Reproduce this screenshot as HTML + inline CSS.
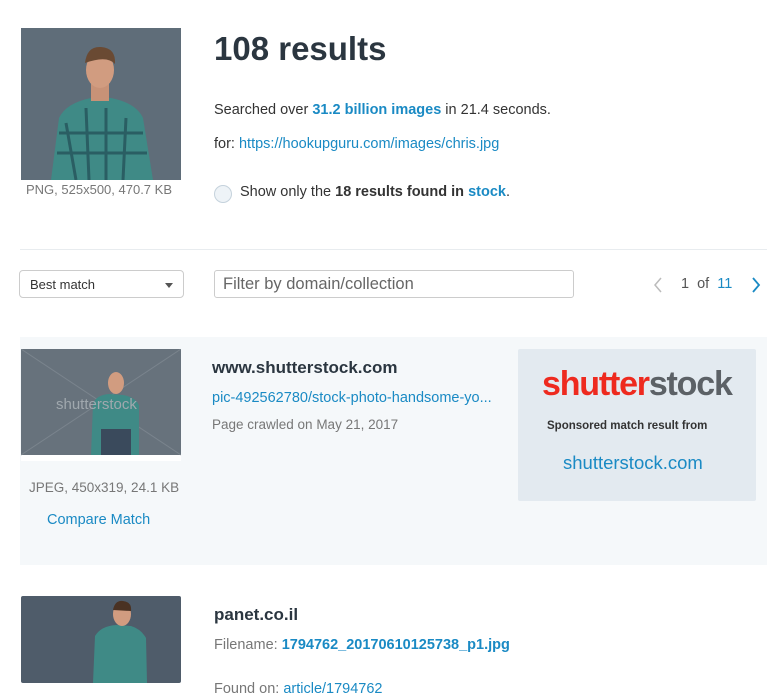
<!DOCTYPE html>
<html><head><meta charset="utf-8"><style>
*{margin:0;padding:0;box-sizing:border-box}
body{width:774px;height:700px;overflow:hidden;background:#fff;font-family:"Liberation Sans",sans-serif;color:#333;position:relative}
.a{position:absolute;white-space:nowrap}
.blue{color:#1a8ac4}
.g{color:#777}
</style></head><body>
<svg class="a" style="left:21px;top:28px" width="160" height="152" viewBox="0 0 160 152">
<rect width="160" height="152" fill="#5f6d79"/>
<path d="M30 152 L38 90 Q45 75 70 70 L90 70 Q115 75 122 90 L132 152Z" fill="#3f8a86"/>
<path d="M45 95 L55 152 M65 80 L68 152 M85 80 L85 152 M105 90 L102 152 M38 105 L122 105 M36 125 L126 125" stroke="#2a5e63" stroke-width="3"/>
<rect x="70" y="55" width="18" height="18" fill="#c89277"/>
<ellipse cx="79" cy="42" rx="14" ry="18" fill="#d19c80"/>
<path d="M64 35 Q66 18 80 19 Q95 20 94 36 Q86 27 64 35Z" fill="#6a4a33"/>
</svg>
<div class="a g" style="left:26px;top:182px;font-size:13px">PNG, 525x500, 470.7 KB</div>
<div class="a" style="left:214px;top:30px;font-size:33px;font-weight:bold;color:#2b3640">108 results</div>
<div class="a" style="left:214px;top:102px;font-size:14.5px">Searched over <b class="blue">31.2 billion images</b> in 21.4 seconds.</div>
<div class="a" style="left:214px;top:136px;font-size:14.5px">for: <span class="blue">https://hookupguru.com/images/chris.jpg</span></div>
<div class="a" style="left:214px;top:185px;width:18px;height:18px;border-radius:50%;border:1px solid #c5d2dc;background:#eef3f7"></div>
<div class="a" style="left:240px;top:184px;font-size:14.5px">Show only the <b>18 results found in <span class="blue">stock</span></b>.</div>
<div class="a" style="left:20px;top:249px;width:747px;height:1px;background:#e8ecef"></div>
<div class="a" style="left:19px;top:270px;width:165px;height:28px;border:1px solid #ccc;border-radius:4px;font-size:13px;padding:6px 10px;color:#333">Best match<span style="position:absolute;right:10px;top:12px;border:4px solid transparent;border-top:5px solid #555"></span></div>
<div class="a" style="left:214px;top:270px;width:360px;height:28px;border:1px solid #ccc;border-radius:3px;font-size:16.5px;padding:4px 8px;color:#666">Filter by domain/collection</div>
<svg class="a" style="left:653px;top:277px" width="10" height="16"><path d="M8 1L2 8L8 15" stroke="#bbb" stroke-width="1.5" fill="none"/></svg>
<div class="a" style="left:681px;top:276px;font-size:14.5px;color:#555">1 &nbsp;of &nbsp;<span class="blue">11</span></div>
<svg class="a" style="left:751px;top:277px" width="10" height="16"><path d="M2 1L8 8L2 15" stroke="#1a8ac4" stroke-width="1.8" fill="none"/></svg>
<div class="a" style="left:20px;top:337px;width:747px;height:228px;background:#f5f8fa"></div>
<svg class="a" style="left:21px;top:349px" width="160" height="112" viewBox="0 0 160 112">
<rect width="160" height="106" fill="#67727c"/><rect y="106" width="160" height="6" fill="#fff"/>
<path d="M0 0L160 106M160 0L0 106" stroke="#7a848d" stroke-width="1"/>
<path d="M70 106 L72 55 Q75 46 88 45 L102 46 Q114 48 118 56 L118 106Z" fill="#3f8a86"/>
<rect x="80" y="80" width="30" height="26" fill="#3a4a5c"/>
<ellipse cx="95" cy="34" rx="8" ry="11" fill="#d19c80"/>
<text x="35" y="60" font-size="15" fill="#a0a8ae" font-family="Liberation Sans">shutterstock</text>
</svg>
<div class="a g" style="left:29px;top:480px;font-size:13.5px">JPEG, 450x319, 24.1 KB</div>
<div class="a blue" style="left:47px;top:512px;font-size:14.5px">Compare Match</div>
<div class="a" style="left:212px;top:358px;font-size:17px;font-weight:bold;color:#2b3640">www.shutterstock.com</div>
<div class="a blue" style="left:212px;top:390px;font-size:14.5px">pic-492562780/stock-photo-handsome-yo...</div>
<div class="a g" style="left:212px;top:417px;font-size:13.5px">Page crawled on May 21, 2017</div>
<div class="a" style="left:518px;top:349px;width:238px;height:152px;background:#e3eaf0;border-radius:2px"></div>
<div class="a" style="left:542px;top:365px;font-size:34px;font-weight:bold;letter-spacing:-1.2px"><span style="color:#ee2a1f">shutter</span><span style="color:#5c6166">stock</span></div>
<div class="a" style="left:547px;top:420px;font-size:11.5px;font-weight:bold;color:#333">Sponsored match result from</div>
<div class="a blue" style="left:563px;top:452px;font-size:18.5px">shutterstock.com</div>
<svg class="a" style="left:21px;top:596px" width="160" height="87" viewBox="0 0 160 87">
<rect width="160" height="87" rx="2" fill="#4f5c6a"/>
<path d="M72 87 L74 40 Q80 30 95 29 L110 30 Q120 33 125 42 L126 87Z" fill="#3f8a86"/>
<ellipse cx="101" cy="18" rx="9" ry="12" fill="#d19c80"/>
<path d="M92 14 Q94 4 102 5 Q111 6 110 15Z" fill="#4a3223"/>
</svg>
<div class="a" style="left:214px;top:605px;font-size:17px;font-weight:bold;color:#2b3640">panet.co.il</div>
<div class="a g" style="left:214px;top:637px;font-size:14.5px">Filename: <b class="blue">1794762_20170610125738_p1.jpg</b></div>
<div class="a g" style="left:214px;top:681px;font-size:14.5px">Found on: <span class="blue">article/1794762</span></div>
</body></html>
